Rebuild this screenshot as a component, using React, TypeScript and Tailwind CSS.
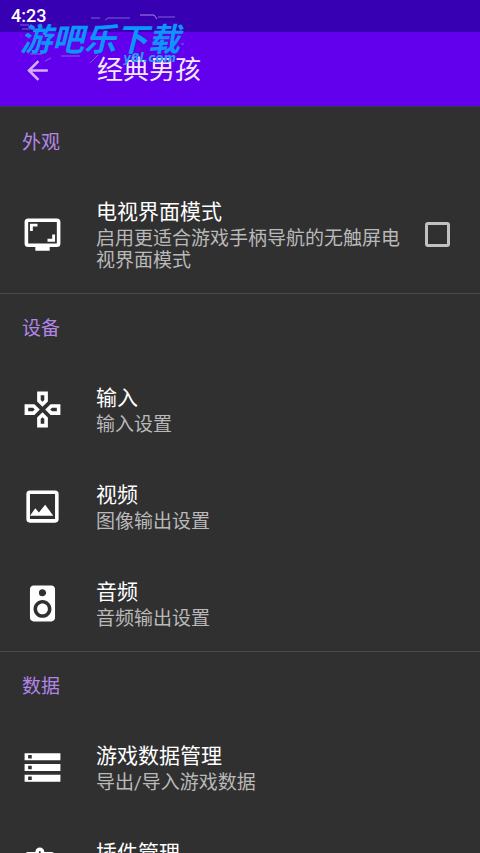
import React, { useState } from 'react';
import { MdArrowBack, MdOutlineExtension, MdOutlineGamepad, MdSpeaker, MdStorage } from 'react-icons/md';

interface ItemProps {
  icon: React.ReactNode;
  title: string;
  summary: string;
}

const TvIcon: React.FC = () => (
  <svg viewBox="0 0 24 24" className="size-[43px]" fill="currentColor" aria-hidden="true">
    <path
      fillRule="evenodd"
      d="M4 3h16a2 2 0 0 1 2 2v12a2 2 0 0 1-2 2h-4v2H8v-2H4a2 2 0 0 1-2-2V5a2 2 0 0 1 2-2zm0 2v12h16V5z"
    />
    <path d="M5 6h4.200v1.600H6.600V10H5zM19 16h-4.200v-1.600h2.600V12H19z" />
  </svg>
);

const PhotoIcon: React.FC = () => (
  <svg viewBox="0 0 24 24" className="size-[43px]" fill="currentColor" aria-hidden="true">
    <path
      fillRule="evenodd"
      d="M5 3h14a2 2 0 0 1 2 2v14a2 2 0 0 1-2 2H5a2 2 0 0 1-2-2V5a2 2 0 0 1 2-2zm0 2v14h14V5z"
    />
    <path d="M5 17.200l3-4.200 2 2.300L13.500 11l4.500 6.200z" />
  </svg>
);

const Section: React.FC<{ title: string; children: React.ReactNode }> = ({ title, children }) => (
  <section className="border-b border-[#4b4b4b]">
    <h2 className="px-[22px] pt-5 pb-4 text-[19px] leading-[30px] text-[#b286e8]">{title}</h2>
    {children}
  </section>
);

const ItemText: React.FC<{ title: string; summary: string }> = ({ title, summary }) => (
  <span className="min-w-0 flex-1">
    <span className="block text-[21px] leading-8 text-white">{title}</span>
    <span className="block text-[19px] leading-[22px] text-[#b9b9b9]">{summary}</span>
  </span>
);

const Item: React.FC<ItemProps> = ({ icon, title, summary }) => (
  <button type="button" className="flex w-full items-center gap-8 px-[21px] pt-[22px] pb-[21px] text-left">
    <span className="shrink-0 text-[43px] text-white">{icon}</span>
    <ItemText title={title} summary={summary} />
  </button>
);

const App: React.FC = () => {
  const [tvMode, setTvMode] = useState(false);

  return (
    <div className="relative h-screen overflow-hidden bg-[#303030] font-['Roboto','Noto_Sans_CJK_SC',sans-serif]">
      <div className="flex h-8 items-center bg-[#3700b3] px-[11px] text-lg font-medium text-white">4:23</div>
      <header className="flex h-[75px] items-center gap-11 border-b border-[#41325a] bg-[#6200ee] px-[22px] pt-0.5">
        <button type="button" aria-label="返回" className="text-[31px] text-[#d4adff]">
          <MdArrowBack />
        </button>
        <h1 className="text-[26px] leading-9 text-[#f3eaff]">经典男孩</h1>
      </header>

      {/* site logo stamped over the bars */}
      <div aria-hidden="true" className="absolute top-[14px] left-5 italic">
        <svg viewBox="0 0 170 54" className="absolute top-0 left-0 w-[170px]" stroke="#7b63d8" fill="none">
          <path d="M0 11h9M2 15h8M71 4h9M85 6l3-2h22M138 3h17M10 40h12M41 42h19M70 49l8-8M25 47l6-3M161 30h3" />
          <path d="M120 1h14l3 4" stroke="#a08be8" />
        </svg>
        <div className="relative text-[32px] leading-[52px] font-bold whitespace-nowrap text-[#0c95fb]">游吧乐下载</div>
        <div className="absolute top-9 right-1 font-['DejaVu_Sans',sans-serif] text-xs leading-4 font-bold text-[#249dfa]">
          y8l.com
        </div>
      </div>

      <main className="pt-px">
        <Section title="外观">
          <label className="flex items-center pt-[22px] pr-[30px] pb-[21px] pl-[21px]">
            <span className="mr-8 shrink-0 text-white"><TvIcon /></span>
            <ItemText title="电视界面模式" summary="启用更适合游戏手柄导航的无触屏电视界面模式" />
            <input
              type="checkbox"
              checked={tvMode}
              onChange={(e) => setTvMode(e.target.checked)}
              className="ml-5 size-[25px] shrink-0 appearance-none rounded-[3px] border-[3px] border-[#c1c1c1] checked:bg-[#bb86fc]"
            />
          </label>
        </Section>
        <Section title="设备">
          <Item icon={<MdOutlineGamepad />} title="输入" summary="输入设置" />
          <Item icon={<PhotoIcon />} title="视频" summary="图像输出设置" />
          <Item icon={<MdSpeaker />} title="音频" summary="音频输出设置" />
        </Section>
        <Section title="数据">
          <Item icon={<MdStorage />} title="游戏数据管理" summary="导出/导入游戏数据" />
          <Item icon={<MdOutlineExtension />} title="插件管理" summary="管理插件" />
        </Section>
      </main>
    </div>
  );
};

export default App;
